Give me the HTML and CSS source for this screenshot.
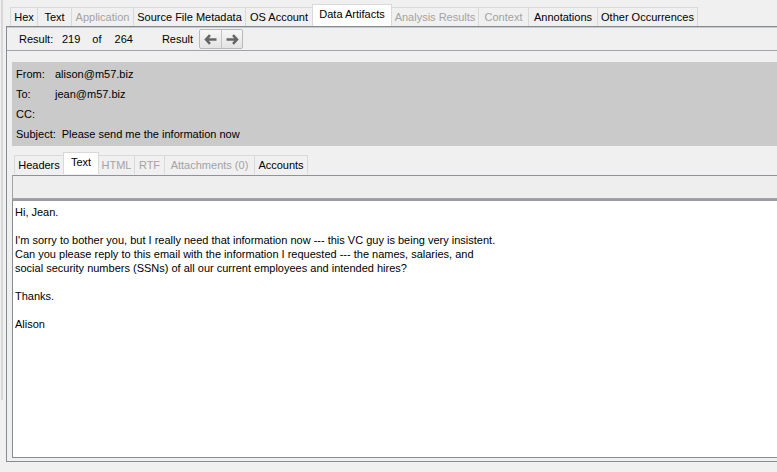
FILE: index.html
```html
<!DOCTYPE html>
<html>
<head>
<meta charset="utf-8">
<link rel="stylesheet" href="styles.css">
</head>
<body>
<div class="app">
  <div class="edge"></div>
  <div class="main">
    <div class="tabs top-tabs">
      <div class="tab w-hex">Hex</div>
      <div class="tab w-text">Text</div>
      <div class="tab disabled w-app">Application</div>
      <div class="tab w-sfm">Source File Metadata</div>
      <div class="tab w-os">OS Account</div>
      <div class="tab selected w-da">Data Artifacts</div>
      <div class="tab disabled w-ar">Analysis Results</div>
      <div class="tab disabled w-ctx">Context</div>
      <div class="tab w-ann">Annotations</div>
      <div class="tab w-oo">Other Occurrences</div>
    </div>
    <div class="panel">
      <div class="toolbar">
        <span class="t-result">Result:</span>
        <span class="t-num">219</span>
        <span class="t-of">of</span>
        <span class="t-total">264</span>
        <span class="t-label">Result</span>
        <div class="navbtns">
          <div class="navbtn">
            <svg width="13" height="11" viewBox="0 0 13 11"><path d="M6 1.2 L2 5.5 L6 9.8 M2.2 5.5 H12.5" fill="none" stroke="#666666" stroke-width="2.5" stroke-linejoin="miter"/></svg>
          </div>
          <div class="navbtn">
            <svg width="13" height="11" viewBox="0 0 13 11"><path d="M7 1.2 L11 5.5 L7 9.8 M10.8 5.5 H0.5" fill="none" stroke="#666666" stroke-width="2.5" stroke-linejoin="miter"/></svg>
          </div>
        </div>
      </div>
      <div class="content">
        <div class="email-header">
          <div class="hrow"><span class="hlabel">From:</span><span>alison@m57.biz</span></div>
          <div class="hrow"><span class="hlabel">To:</span><span>jean@m57.biz</span></div>
          <div class="hrow"><span class="hlabel">CC:</span><span></span></div>
          <div class="hrow"><span class="hlabel">Subject:</span><span>Please send me the information now</span></div>
        </div>
        <div class="tabs sub-tabs">
          <div class="tab s-head">Headers</div>
          <div class="tab selected s-text">Text</div>
          <div class="tab disabled s-html">HTML</div>
          <div class="tab disabled s-rtf">RTF</div>
          <div class="tab disabled s-att">Attachments (0)</div>
          <div class="tab s-acc">Accounts</div>
        </div>
        <div class="subbar"></div>
        <div class="body-text">
          <p>Hi, Jean.</p>
          <p>&nbsp;</p>
          <p>I'm sorry to bother you, but I really need that information now --- this VC guy is being very insistent.</p>
          <p>Can you please reply to this email with the information I requested --- the names, salaries, and</p>
          <p>social security numbers (SSNs) of all our current employees and intended hires?</p>
          <p>&nbsp;</p>
          <p>Thanks.</p>
          <p>&nbsp;</p>
          <p>Alison</p>
        </div>
      </div>
    </div>
  </div>
</div>
</body>
</html>
```

FILE: styles.css
```css
* { box-sizing: border-box; }
html, body {
  margin: 0;
  padding: 0;
  width: 777px;
  height: 472px;
  overflow: hidden;
  background: #f0f0f0;
  font-family: "Liberation Sans", Arial, sans-serif;
  font-size: 11px;
  color: #000;
}
.app {
  display: flex;
  align-items: flex-start;
  height: 472px;
}
.edge {
  margin-left: 1px;
  width: 2px;
  height: 400px;
  background: #d8d8d8;
  flex: none;
}
.main {
  margin-left: 3px;
  width: 800px;
  flex: none;
}
.tabs {
  display: flex;
  align-items: flex-end;
}
.top-tabs {
  height: 26px;
  padding-left: 4px;
}
.tab {
  height: 19px;
  border: 1px solid #d9d9d9;
  border-bottom: none;
  margin-right: -1px;
  background: #f0f0f0;
  display: flex;
  align-items: center;
  justify-content: center;
  white-space: nowrap;
  line-height: 1;
  padding-top: 1px;
  flex: none;
}
.tab.disabled { color: #a3a3a3; }
.tab.selected {
  background: #fff;
  height: 22px;
  padding-top: 0;
  padding-bottom: 3px;
  position: relative;
  z-index: 1;
}
.w-hex { width: 28px; }
.w-text { width: 35px; }
.w-app { width: 63px; }
.w-sfm { width: 113px; }
.w-os { width: 68px; }
.w-da { width: 80px; }
.w-ar { width: 88px; }
.w-ctx { width: 51px; }
.w-ann { width: 70px; }
.w-oo { width: 101px; }

.s-head { width: 50px; }
.s-text { width: 36px; }
.s-html { width: 37px; }
.s-rtf { width: 31px; }
.s-att { width: 91px; }
.s-acc { width: 54px; }

.panel {
  border-left: 1px solid #878c93;
  border-top: 1px solid #878c93;
  border-bottom: 1px solid #878c93;
  box-shadow: inset 0 1px 0 #c9c9c9;
  height: 436px;
}
.toolbar {
  height: 24px;
  border-bottom: 1px solid #a0a4a9;
  display: flex;
  align-items: center;
  padding-left: 12px;
  padding-top: 1px;
}
.t-result { width: 34px; }
.t-num { margin-left: 9px; }
.t-of { margin-left: 12px; }
.t-total { margin-left: 13px; }
.t-label { margin-left: 29px; }
.navbtns {
  margin-left: 6px;
  display: flex;
  height: 20px;
  border: 1px solid #b9b9b9;
  border-radius: 2px;
  background: linear-gradient(#f7f7f7, #e4e4e4);
}
.navbtn {
  width: 21px;
  height: 18px;
  display: flex;
  align-items: center;
  justify-content: center;
}
.navbtn + .navbtn { border-left: 1px solid #c4c4c4; }

.content {
  padding: 11px 0 4px 5px;
}
.email-header {
  background: #cacaca;
  height: 84px;
  padding: 2px 0 2px 4px;
}
.hrow {
  height: 20px;
  display: flex;
  align-items: center;
}
.hlabel {
  min-width: 33px;
  margin-right: 6px;
}
.sub-tabs {
  height: 28px;
  padding-left: 2px;
}
.subbar {
  height: 24px;
  border: 1px solid #a3a3a3;
  border-right: none;
  border-top-color: #8f9399;
  background: #eeeeee;
  margin-top: 1px;
}
.body-text {
  height: 259px;
  background: #fff;
  border: 1px solid #878c93;
  border-right: none;
  border-top: 2px solid #9a9ea4;
  padding: 4px 0 0 2px;
  line-height: 14px;
}
.body-text p {
  margin: 0;
  white-space: nowrap;
}
```
